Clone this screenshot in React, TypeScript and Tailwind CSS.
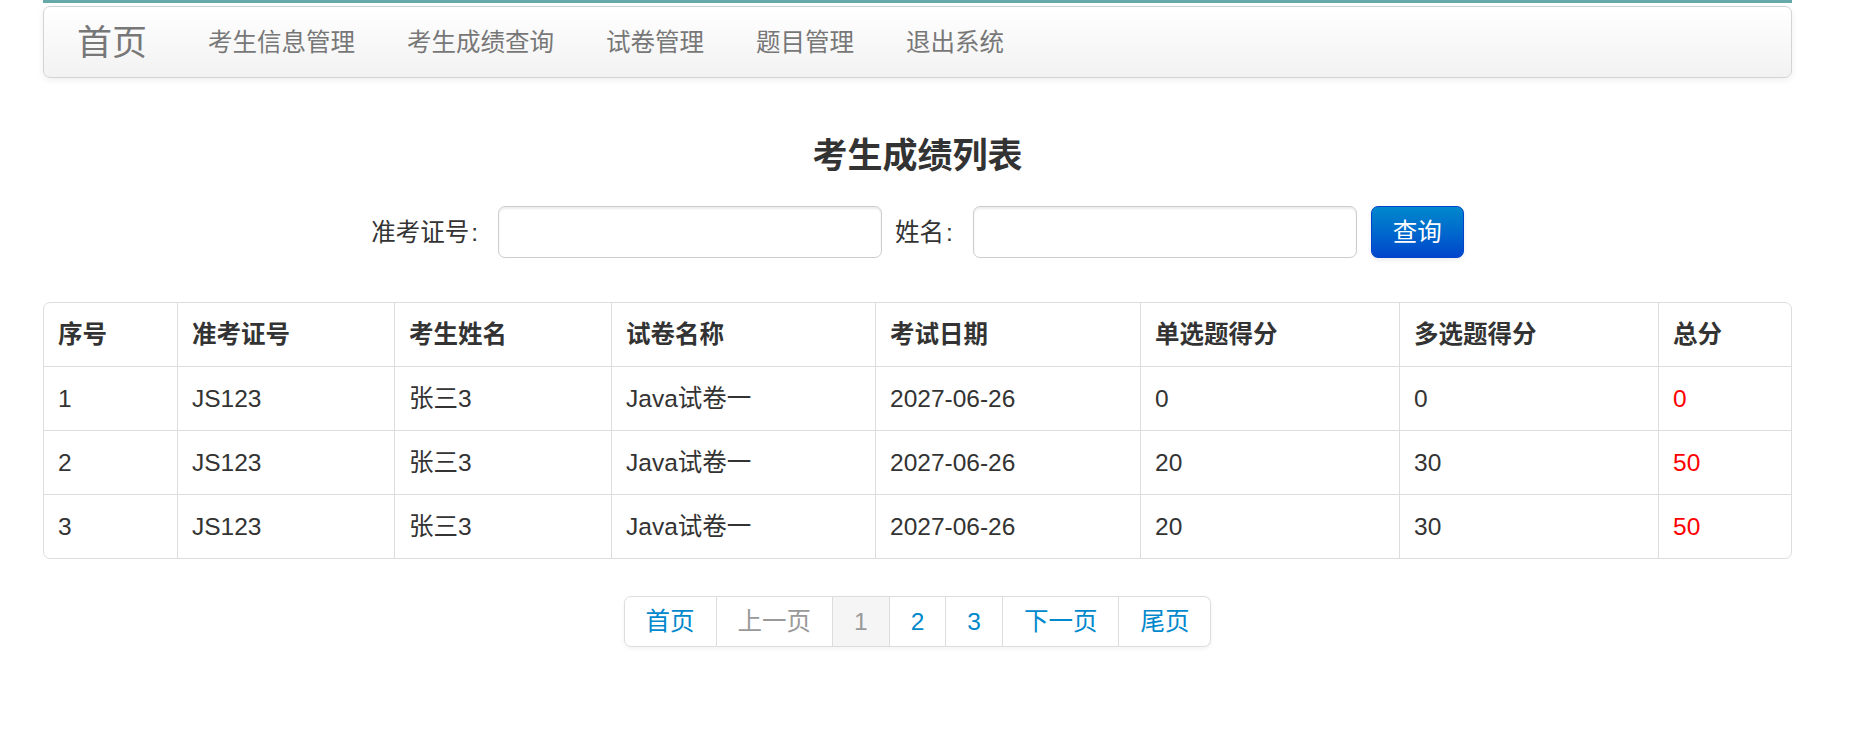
import React from "react";

const rows = [
  { id: "1", no: "JS123", name: "张三3", paper: "Java试卷一", date: "2027-06-26", s: "0", m: "0", t: "0" },
  { id: "2", no: "JS123", name: "张三3", paper: "Java试卷一", date: "2027-06-26", s: "20", m: "30", t: "50" },
  { id: "3", no: "JS123", name: "张三3", paper: "Java试卷一", date: "2027-06-26", s: "20", m: "30", t: "50" },
];

const headers = [
  { label: "序号", w: "w-[133px]" },
  { label: "准考证号", w: "w-[217px]" },
  { label: "考生姓名", w: "w-[217px]" },
  { label: "试卷名称", w: "w-[264px]" },
  { label: "考试日期", w: "w-[265px]" },
  { label: "单选题得分", w: "w-[259px]" },
  { label: "多选题得分", w: "w-[259px]" },
  { label: "总分", w: "w-[134px]" },
];

export default function App() {
  const navLinks = ["考生信息管理", "考生成绩查询", "试卷管理", "题目管理", "退出系统"];
  const pages = [
    { t: "首页", kind: "link" },
    { t: "上一页", kind: "disabled" },
    { t: "1", kind: "active" },
    { t: "2", kind: "link" },
    { t: "3", kind: "link" },
    { t: "下一页", kind: "link" },
    { t: "尾页", kind: "link" },
  ];
  return (
    <div className="min-h-[730px] bg-white pl-[43px] pr-[70px] text-[#333] font-['Liberation_Sans','Noto_Sans_CJK_SC',sans-serif]">
      <div className="h-[3px] bg-[#67a8a8]" />
      <div className="mt-[3px] flex h-[72px] items-center rounded-[7px] border border-[#d4d4d4] bg-linear-to-b from-white to-[#f2f2f2] pl-[33px] pr-[36px] shadow-[0_2px_7px_rgba(0,0,0,0.065)]">
        <span className="pr-[35px] text-[35px] leading-[35px] text-[#777]">首页</span>
        {navLinks.map((l) => (
          <span key={l} className="px-[26px] text-[24.5px] leading-[35px] text-[#777]">
            {l}
          </span>
        ))}
      </div>

      <h3 className="mt-[57px] text-center text-[35px] font-bold leading-[42px] text-[#333]">考生成绩列表</h3>

      <div className="mt-[29px] flex items-center justify-center">
        <span className="text-[24.5px] leading-[35px]">
          准考证号<span className="ml-[2px] mr-[3px]">:</span>
        </span>
        <div className="ml-[17px] h-[52px] w-[384px] rounded-[7px] border border-[#ccc] bg-white shadow-[inset_0_2px_2px_rgba(0,0,0,0.075)]" />
        <span className="ml-[13px] text-[24.5px] leading-[35px]">
          姓名<span className="ml-[2px] mr-[3px]">:</span>
        </span>
        <div className="ml-[17px] h-[52px] w-[384px] rounded-[7px] border border-[#ccc] bg-white shadow-[inset_0_2px_2px_rgba(0,0,0,0.075)]" />
        <button className="ml-[14px] flex h-[52px] w-[93px] items-center justify-center rounded-[7px] border border-[#0044cc] bg-linear-to-b from-[#0088cc] to-[#0044cc] text-[24.5px] leading-[35px] text-white shadow-[0_2px_4px_rgba(0,0,0,0.08)]">
          查询
        </button>
      </div>

      <div className="mt-[44px] overflow-hidden rounded-[7px] border border-[#ddd]">
        <table className="w-full table-fixed border-separate border-spacing-0 text-[24.5px] leading-[35px]">
          <thead>
            <tr>
              {headers.map((h, i) => (
                <th
                  key={h.label}
                  className={`${h.w} px-[14px] pt-[14px] pb-[14px] text-left font-bold ${i > 0 ? "border-l border-[#ddd]" : ""}`}
                >
                  {h.label}
                </th>
              ))}
            </tr>
          </thead>
          <tbody>
            {rows.map((r) => {
              const cells = [r.id, r.no, r.name, r.paper, r.date, r.s, r.m, r.t];
              return (
                <tr key={r.id}>
                  {cells.map((c, i) => (
                    <td
                      key={i}
                      className={`border-t border-[#ddd] px-[14px] py-[14px] ${i > 0 ? "border-l" : ""} ${i === 7 ? "text-[#ff0000]" : "text-[#333]"}`}
                    >
                      {c}
                    </td>
                  ))}
                </tr>
              );
            })}
          </tbody>
        </table>
      </div>

      <div className="mt-[37px] flex justify-center">
        <div className="flex rounded-[7px] shadow-[0_2px_4px_rgba(0,0,0,0.05)]">
          {pages.map((p, i) => (
            <span
              key={p.t}
              className={`border-y border-r border-[#ddd] px-[21px] py-[7px] text-[24.5px] leading-[35px] ${i === 0 ? "rounded-l-[7px] border-l" : ""} ${i === pages.length - 1 ? "rounded-r-[7px]" : ""} ${p.kind === "link" ? "bg-white text-[#0088cc]" : p.kind === "active" ? "bg-[#f5f5f5] text-[#999]" : "bg-white text-[#999]"}`}
            >
              {p.t}
            </span>
          ))}
        </div>
      </div>
    </div>
  );
}
